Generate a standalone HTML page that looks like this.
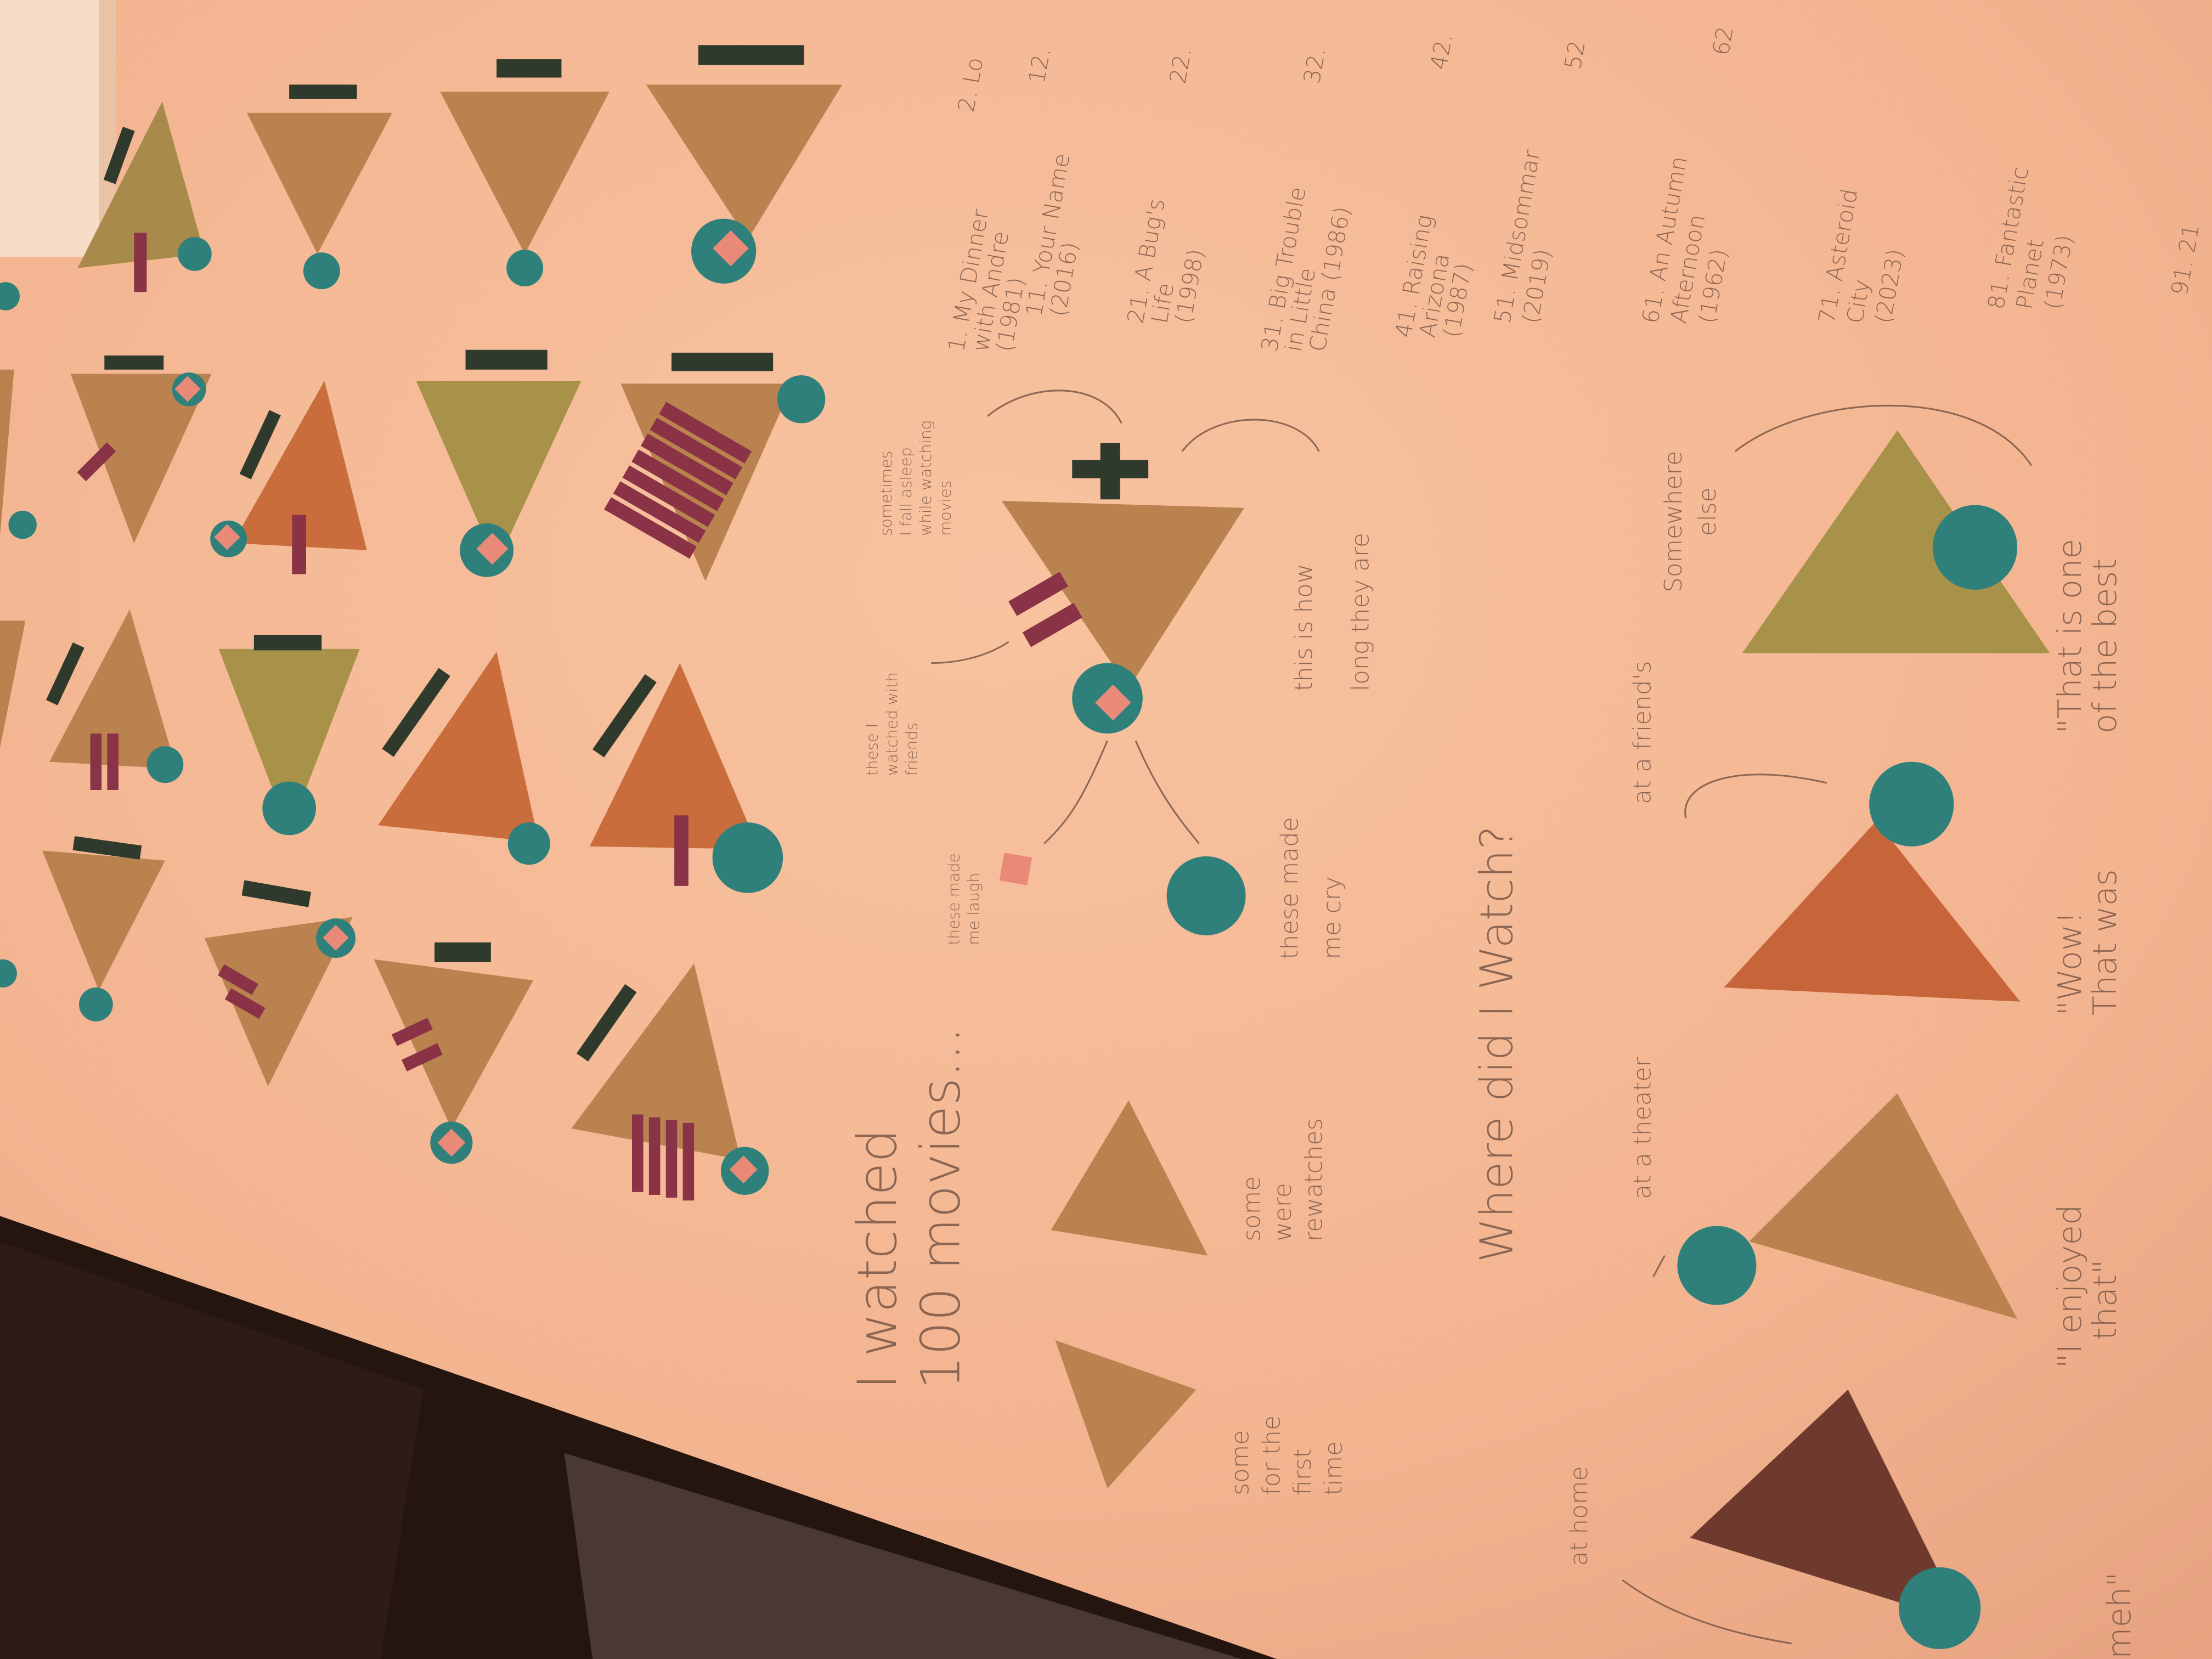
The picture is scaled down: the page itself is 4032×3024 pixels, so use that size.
<!DOCTYPE html>
<html><head><meta charset="utf-8">
<style>
html,body{margin:0;padding:0;background:#1e1210;}
svg{display:block;}
text{font-family:"DejaVu Sans","Liberation Sans",sans-serif;fill:#7a5848;font-weight:300;opacity:0.85;}
</style></head><body>
<svg width="4032" height="3024" viewBox="0 0 1568 1176" xmlns="http://www.w3.org/2000/svg">
<defs>
<radialGradient id="pg" cx="0.45" cy="0.35" r="0.9">
<stop offset="0" stop-color="#f8c3a0"/>
<stop offset="0.6" stop-color="#f3b490"/>
<stop offset="1" stop-color="#e5a07e"/>
</radialGradient>
<linearGradient id="fl" x1="0" y1="0" x2="1" y2="1">
<stop offset="0" stop-color="#3a2019"/>
<stop offset="1" stop-color="#150c0a"/>
</linearGradient>
</defs>
<rect width="1568" height="1176" fill="url(#fl)"/>
<polygon points="0,0 1568,0 1568,1176 905,1176 0,862" fill="url(#pg)"/>
<polygon points="0,862 905,1176 0,1176" fill="#24150f"/>
<polygon points="0,880 300,985 270,1176 0,1176" fill="#2e1b16"/>
<polygon points="400,1030 880,1176 420,1176" fill="#4a3832"/>
<!-- top-left notebook -->
<rect x="0" y="0" width="80" height="182" fill="#f7dcc8"/>
<rect x="70" y="0" width="12" height="182" fill="#e9c4a8"/>

<g stroke="none">
<polygon points="55,190 115,72 145,180" fill="#a88a4a"/>
<polygon points="175,80 278,80 225,180" fill="#b9824f"/>
<polygon points="312,65 432,65 372,180" fill="#b9824f"/>
<polygon points="458,60 597,60 530,170" fill="#b9824f"/>
<polygon points="50,265 150,265 95,385" fill="#b9824f"/>
<polygon points="165,385 230,270 260,390" fill="#c96d3d"/>
<polygon points="295,270 412,270 352,400" fill="#a89148"/>
<polygon points="440,272 562,272 500,412" fill="#b9824f"/>
<polygon points="0,262 10,262 0,380" fill="#b9824f"/>
<polygon points="35,540 92,432 125,545" fill="#b9824f"/>
<polygon points="155,460 255,460 205,590" fill="#a89148"/>
<polygon points="268,585 352,462 382,597" fill="#c96d3d"/>
<polygon points="418,600 482,470 538,602" fill="#c96d3d"/>
<polygon points="0,440 18,440 0,530" fill="#b9824f"/>
<polygon points="30,603 117,610 70,702" fill="#b9824f"/>
<polygon points="145,665 250,650 190,770" fill="#b9824f"/>
<polygon points="265,680 378,695 320,800" fill="#b9824f"/>
<polygon points="405,800 492,683 525,822" fill="#b9824f"/>
<polygon points="710,355 882,360 800,488" fill="#b9824f"/>
<polygon points="745,872 800,780 856,890" fill="#b9824f"/>
<polygon points="748,950 848,985 785,1055" fill="#b9824f"/>
<polygon points="1235,463 1345,305 1453,463" fill="#a89148"/>
<polygon points="1222,700 1330,582 1432,710" fill="#c7653a"/>
<polygon points="1240,880 1345,775 1430,935" fill="#b9824f"/>
<polygon points="1198,1090 1310,985 1392,1150" fill="#6e3a2e"/>
</g>

<g fill="#2f3a2c">
<rect x="205" y="60" width="48" height="10"/>
<rect x="352" y="42" width="46" height="13"/>
<rect x="495" y="32" width="75" height="14"/>
<rect x="74" y="252" width="42" height="10"/>
<rect x="330" y="248" width="58" height="14"/>
<rect x="476" y="250" width="72" height="13"/>
<rect x="180" y="450" width="48" height="11"/>
<rect x="52" y="596" width="48" height="10" transform="rotate(8 76 601)"/>
<rect x="172" y="628" width="48" height="11" transform="rotate(10 196 633)"/>
<rect x="308" y="668" width="40" height="14"/>
<rect x="780" y="314" width="14" height="40"/>
<rect x="760" y="326" width="54" height="13"/>
<rect x="80" y="90" width="9" height="40" transform="rotate(20 84 110)"/>
<rect x="180" y="290" width="9" height="50" transform="rotate(25 184 315)"/>
<rect x="42" y="455" width="9" height="45" transform="rotate(25 46 477)"/>
<rect x="290" y="470" width="10" height="70" transform="rotate(35 295 505)"/>
<rect x="438" y="475" width="10" height="65" transform="rotate(35 443 507)"/>
<rect x="425" y="695" width="10" height="60" transform="rotate(35 430 725)"/>
</g>
<g fill="#8a3346">
<rect x="95" y="165" width="9" height="42"/>
<rect x="64" y="312" width="9" height="30" transform="rotate(45 68 327)"/>
<rect x="207" y="365" width="10" height="42"/>
<rect x="64" y="520" width="8" height="40"/><rect x="76" y="520" width="8" height="40"/>
<rect x="478" y="578" width="10" height="50"/>
<rect x="155" y="690" width="28" height="9" transform="rotate(30 169 694)"/>
<rect x="160" y="707" width="28" height="9" transform="rotate(30 174 711)"/>
<rect x="278" y="727" width="28" height="9" transform="rotate(-25 292 731)"/>
<rect x="285" y="745" width="28" height="9" transform="rotate(-25 299 749)"/>
<rect x="448" y="790" width="8" height="55"/><rect x="460" y="792" width="8" height="55"/><rect x="472" y="794" width="8" height="55"/><rect x="484" y="796" width="8" height="55"/>
<rect x="715" y="415" width="42" height="12" transform="rotate(-30 736 421)"/>
<rect x="725" y="437" width="42" height="12" transform="rotate(-30 746 443)"/>
<g transform="rotate(30 475 350)">
<rect x="440" y="295" width="70" height="10"/><rect x="440" y="308" width="70" height="10"/><rect x="440" y="321" width="70" height="10"/><rect x="440" y="334" width="70" height="10"/><rect x="440" y="347" width="70" height="10"/><rect x="440" y="360" width="70" height="10"/><rect x="440" y="373" width="70" height="10"/>
</g>
</g>
<g fill="#2f807b">
<circle cx="138" cy="180" r="12"/><circle cx="228" cy="192" r="13"/><circle cx="372" cy="190" r="13"/>
<circle cx="513" cy="178" r="23"/><circle cx="134" cy="276" r="12"/><circle cx="568" cy="283" r="17"/>
<circle cx="162" cy="382" r="13"/><circle cx="345" cy="390" r="19"/><circle cx="16" cy="372" r="10"/>
<circle cx="117" cy="542" r="13"/><circle cx="205" cy="573" r="19"/><circle cx="375" cy="598" r="15"/>
<circle cx="530" cy="608" r="25"/><circle cx="238" cy="665" r="14"/><circle cx="68" cy="712" r="12"/>
<circle cx="320" cy="810" r="15"/><circle cx="528" cy="830" r="17"/><circle cx="4" cy="210" r="10"/><circle cx="2" cy="690" r="10"/>
<circle cx="785" cy="495" r="25"/><circle cx="855" cy="635" r="28"/>
<circle cx="1400" cy="388" r="30"/><circle cx="1355" cy="570" r="30"/><circle cx="1217" cy="897" r="28"/><circle cx="1375" cy="1140" r="29"/>
</g>
<g fill="#e98a78">
<rect x="509" y="167" width="18" height="18" transform="rotate(45 518 176)"/>
<rect x="127" y="269" width="13" height="13" transform="rotate(45 133 275)"/>
<rect x="155" y="374" width="13" height="13" transform="rotate(45 161 380)"/>
<rect x="341" y="381" width="16" height="16" transform="rotate(45 349 389)"/>
<rect x="232" y="658" width="13" height="13" transform="rotate(45 238 664)"/>
<rect x="313" y="803" width="14" height="14" transform="rotate(45 320 810)"/>
<rect x="520" y="822" width="14" height="14" transform="rotate(45 527 829)"/>
<rect x="780" y="489" width="18" height="18" transform="rotate(45 789 498)"/>
<rect x="710" y="606" width="20" height="20" transform="rotate(10 720 616)"/>
</g>

<g fill="none" stroke="#7a5848" stroke-width="1.2" opacity="0.85">
<path d="M795 300 C780 270 730 270 700 295"/>
<path d="M838 320 C860 290 920 290 935 320"/>
<path d="M715 455 C700 465 680 470 660 470"/>
<path d="M785 525 C770 560 760 580 740 598"/>
<path d="M805 525 C820 560 835 580 850 598"/>
<path d="M1195 580 C1190 555 1230 540 1295 555"/>
<path d="M1230 320 C1280 280 1400 270 1440 330"/>
<path d="M1180 890 L1172 905"/>
<path d="M1150 1120 C1190 1150 1240 1160 1270 1165"/>
</g>

<g font-size="38">
<text transform="translate(635,985) rotate(-90)">I watched</text>
<text transform="translate(680,985) rotate(-90)">100 movies...</text>
<text transform="translate(1072,895) rotate(-90)" font-size="32">Where did I Watch?</text>
</g>
<g font-size="17">
<text transform="translate(885,1060) rotate(-90)">some</text>
<text transform="translate(907,1060) rotate(-90)">for the</text>
<text transform="translate(929,1060) rotate(-90)">first</text>
<text transform="translate(951,1060) rotate(-90)">time</text>
<text transform="translate(893,880) rotate(-90)">some</text>
<text transform="translate(915,880) rotate(-90)">were</text>
<text transform="translate(937,880) rotate(-90)">rewatches</text>
<text transform="translate(920,680) rotate(-90)">these made</text>
<text transform="translate(950,680) rotate(-90)">me cry</text>
<text transform="translate(930,490) rotate(-90)">this is how</text>
<text transform="translate(970,490) rotate(-90)">long they are</text>
<text transform="translate(1192,420) rotate(-90)">Somewhere</text>
<text transform="translate(1216,380) rotate(-90)">else</text>
<text transform="translate(1170,570) rotate(-90)">at a friend's</text>
<text transform="translate(1170,850) rotate(-90)">at a theater</text>
<text transform="translate(1125,1110) rotate(-90)">at home</text>
<text transform="translate(1475,970) rotate(-90)" font-size="23">"I enjoyed</text>
<text transform="translate(1500,950) rotate(-90)" font-size="23">that"</text>
<text transform="translate(1475,720) rotate(-90)" font-size="23">"Wow!</text>
<text transform="translate(1500,720) rotate(-90)" font-size="23">That was</text>
<text transform="translate(1475,520) rotate(-90)" font-size="23">"That is one</text>
<text transform="translate(1500,520) rotate(-90)" font-size="23">of the best</text>
<text transform="translate(1510,1176) rotate(-90)" font-size="23">meh"</text>
</g>
<g font-size="11">
<text transform="translate(622,550) rotate(-90)">these I</text>
<text transform="translate(636,550) rotate(-90)">watched with</text>
<text transform="translate(650,550) rotate(-90)">friends</text>
<text transform="translate(632,380) rotate(-90)">sometimes</text>
<text transform="translate(646,380) rotate(-90)">I fall asleep</text>
<text transform="translate(660,380) rotate(-90)">while watching</text>
<text transform="translate(674,380) rotate(-90)">movies</text>
<text transform="translate(680,670) rotate(-90)">these made</text>
<text transform="translate(694,670) rotate(-90)">me laugh</text>
</g>
<g font-size="16">
<text transform="translate(683,250) rotate(-80)">1. My Dinner</text>
<text transform="translate(700,250) rotate(-80)">with Andre</text>
<text transform="translate(717,250) rotate(-80)">(1981)</text>
<text transform="translate(738,225) rotate(-80)">11. Your Name</text>
<text transform="translate(755,225) rotate(-80)">(2016)</text>
<text transform="translate(810,230) rotate(-80)">21. A Bug's</text>
<text transform="translate(827,230) rotate(-80)">Life</text>
<text transform="translate(844,230) rotate(-80)">(1998)</text>
<text transform="translate(905,250) rotate(-80)">31. Big Trouble</text>
<text transform="translate(922,250) rotate(-80)">in Little</text>
<text transform="translate(939,250) rotate(-80)">China (1986)</text>
<text transform="translate(1000,240) rotate(-80)">41. Raising</text>
<text transform="translate(1017,240) rotate(-80)">Arizona</text>
<text transform="translate(1034,240) rotate(-80)">(1987)</text>
<text transform="translate(1070,230) rotate(-80)">51. Midsommar</text>
<text transform="translate(1090,230) rotate(-80)">(2019)</text>
<text transform="translate(1175,230) rotate(-80)">61. An Autumn</text>
<text transform="translate(1195,230) rotate(-80)">Afternoon</text>
<text transform="translate(1215,230) rotate(-80)">(1962)</text>
<text transform="translate(1300,230) rotate(-80)">71. Asteroid</text>
<text transform="translate(1320,230) rotate(-80)">City</text>
<text transform="translate(1340,230) rotate(-80)">(2023)</text>
<text transform="translate(1420,220) rotate(-80)">81. Fantastic</text>
<text transform="translate(1440,220) rotate(-80)">Planet</text>
<text transform="translate(1460,220) rotate(-80)">(1973)</text>
<text transform="translate(1550,210) rotate(-80)">91. 21</text>
<text transform="translate(690,80) rotate(-80)">2. Lo</text>
<text transform="translate(740,60) rotate(-80)">12.</text>
<text transform="translate(840,60) rotate(-80)">22.</text>
<text transform="translate(935,60) rotate(-80)">32.</text>
<text transform="translate(1025,50) rotate(-80)">42.</text>
<text transform="translate(1120,50) rotate(-80)">52</text>
<text transform="translate(1225,40) rotate(-80)">62</text>
</g>
</svg>
</body></html>
